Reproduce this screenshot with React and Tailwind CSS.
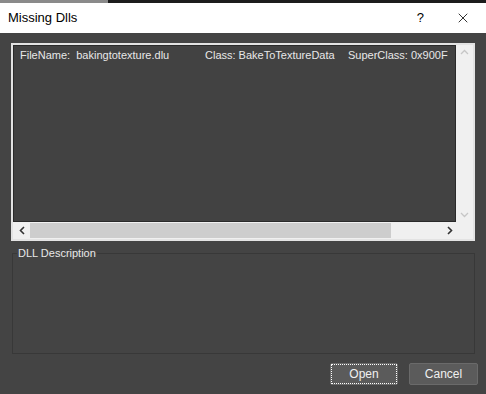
import { X } from 'lucide-react';

const font = { fontFamily: '"Segoe UI", Tahoma, "Liberation Sans", Arial, sans-serif' };

const MissingDllsDialog = () => {
  return (
    <div className="w-[486px] h-[394px] bg-[#444444] flex flex-col overflow-hidden" style={font}>
      {/* strip of the window behind */}
      <div className="h-[3px] flex shrink-0">
        <div className="w-[108px] bg-[#8a8a8a]" />
        <div className="flex-1 bg-[#1c1c1c]" />
      </div>

      {/* Title bar */}
      <div className="h-[30px] bg-white flex items-center shrink-0">
        <span className="ml-[8px] text-[13px] text-black">Missing Dlls</span>
        <span className="ml-auto mr-[31px] text-[13px] text-black">?</span>
        <X className="mr-[15px] w-[16px] h-[16px] text-black" strokeWidth={1.2} />
      </div>

      <div className="flex-1 flex flex-col px-[11px] pt-[10px]">
        {/* List box */}
        <div className="h-[198px] border-2 border-[#e3e3e3] flex flex-col">
          <div className="flex-1 flex">
            <div className="flex-1 bg-[#424242] border border-[#2a2a2a] text-[11px] text-[#e8e8e8]">
              <div className="flex pt-[2px] leading-[14px]">
                <span className="ml-[6px] w-[185px]">FileName:&nbsp; bakingtotexture.dlu</span>
                <span className="w-[143px]">Class: BakeToTextureData</span>
                <span>SuperClass: 0x900F</span>
              </div>
            </div>
            <div className="w-[17px] bg-[#f0f0f0] flex flex-col items-center justify-between py-[4px]">
              <svg width="9" height="6" viewBox="0 0 9 6"><path d="M1 5 L4.5 1.5 L8 5" fill="none" stroke="#c6c6c6" strokeWidth="1.3" /></svg>
              <svg width="9" height="6" viewBox="0 0 9 6"><path d="M1 1 L4.5 4.5 L8 1" fill="none" stroke="#c6c6c6" strokeWidth="1.3" /></svg>
            </div>
          </div>
          <div className="h-[17px] bg-[#f0f0f0] flex items-center">
            <div className="w-[17px] flex justify-center">
              <svg width="6" height="9" viewBox="0 0 6 9"><path d="M5 1 L1.5 4.5 L5 8" fill="none" stroke="#333" strokeWidth="1.6" /></svg>
            </div>
            <div className="w-[361px] h-[15px] bg-[#cdcdcd]" />
            <div className="flex-1" />
            <div className="w-[17px] flex justify-center mr-[15px]">
              <svg width="6" height="9" viewBox="0 0 6 9"><path d="M1 1 L4.5 4.5 L1 8" fill="none" stroke="#333" strokeWidth="1.6" /></svg>
            </div>
          </div>
        </div>

        {/* DLL Description group */}
        <div className="relative mt-[12px] h-[101px] border border-[#383838] ml-[1px]">
          <span className="absolute -top-[8px] left-[4px] px-[1px] bg-[#444444] text-[11px] text-[#e8e8e8] leading-[14px]">DLL Description</span>
        </div>

        {/* Buttons */}
        <div className="flex justify-end gap-[11px] mt-[9px] -mr-[3px]">
          <button className="w-[68px] h-[22px] bg-[#5b5b5b] border border-[#6a6a6a] rounded-[2px] text-[12px] text-[#f0f0f0] outline-1 outline-dotted outline-white -outline-offset-[2px]">Open</button>
          <button className="w-[69px] h-[22px] bg-[#5b5b5b] border border-[#6a6a6a] rounded-[2px] text-[12px] text-[#f0f0f0]">Cancel</button>
        </div>
      </div>
    </div>
  );
};

export default function App() {
  return <MissingDllsDialog />;
}
